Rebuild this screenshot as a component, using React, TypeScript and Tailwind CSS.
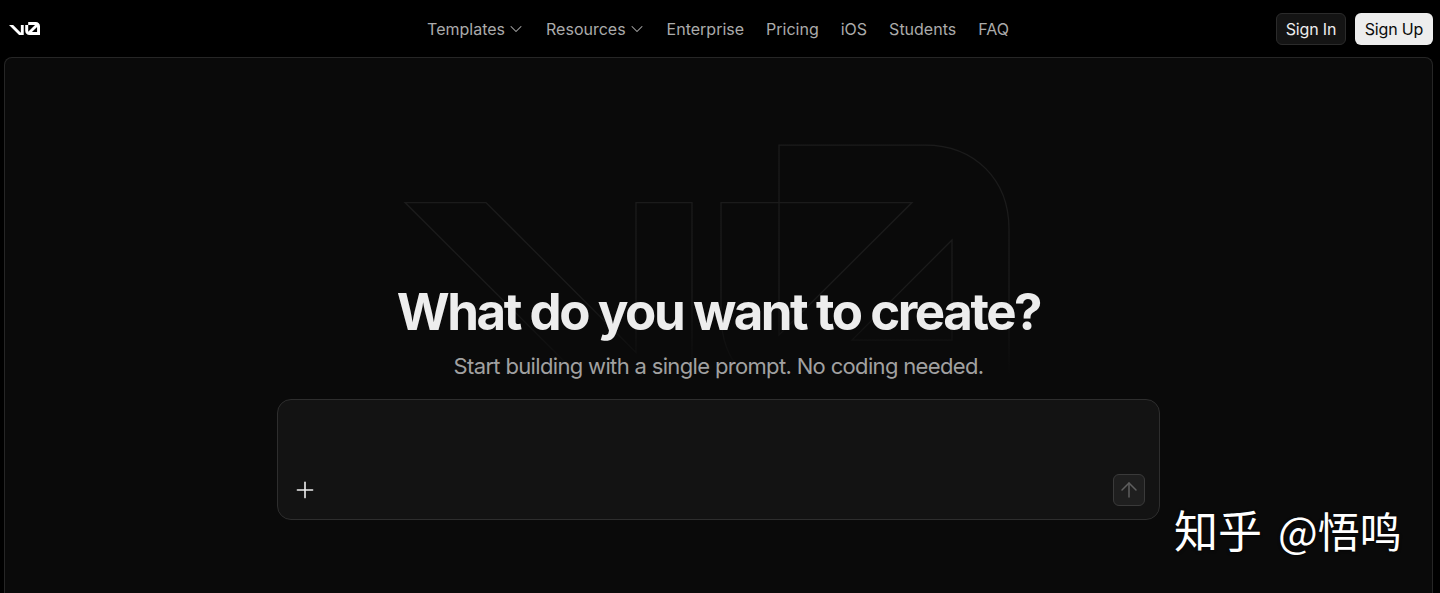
import { ArrowUp, ChevronDown, Plus } from 'lucide-react'

const font = "font-['Inter','Noto_Sans_CJK_SC',sans-serif]"

// same outline for the small logo and the big mark behind the heading
const markV = 'M405 202.500H486L636 352.500V202.500H692V398H601Z'
const markZero =
  'M779 145H925C975 145 1009 180 1009 229V398H805C755 398 721 364 721 314V202.500H779ZM779 202.500V335L912 202.500ZM952 240L852 340H952Z'

function Logo() {
  return (
    <svg width="31" height="13" viewBox="405 145 604 253" fill="white">
      <path d={markV} />
      <path fillRule="evenodd" d={markZero} />
    </svg>
  )
}

function NavBar() {
  return (
    <header className="h-[57px] shrink-0 grid grid-cols-[1fr_auto_1fr] items-center pl-[9px] pr-[7px] bg-black">
      <Logo />
      <nav className="flex items-center gap-[22px] text-[16px] text-[#ababab] -ml-[6px]">
        <span className="flex items-center gap-[1px]">
          Templates <ChevronDown className="-mr-[2px]" size={20} strokeWidth={1.25} />
        </span>
        <span className="flex items-center gap-[1px]">
          Resources <ChevronDown className="-mr-[2px]" size={20} strokeWidth={1.25} />
        </span>
        <span>Enterprise</span>
        <span>Pricing</span>
        <span>iOS</span>
        <span>Students</span>
        <span>FAQ</span>
      </nav>
      <div className="flex items-center justify-end gap-[9px] text-[16px] tracking-[-0.01em]">
        <button className="h-[32px] w-[70px] rounded-md border border-[#2b2b2b] bg-[#141414] text-[#ededed]">
          Sign In
        </button>
        <button className="h-[32px] w-[78px] rounded-md bg-[#ededed] text-[#0a0a0a]">
          Sign Up
        </button>
      </div>
    </header>
  )
}

function BackgroundMark() {
  return (
    <svg
      className="absolute -left-[5px] -top-[58px] pointer-events-none"
      width="1440"
      height="593"
      viewBox="0 0 1440 593"
      fill="none"
      stroke="url(#mark-fade)"
      strokeWidth="1.25"
    >
      <defs>
        <linearGradient id="mark-fade" gradientUnits="userSpaceOnUse" x1="0" y1="290" x2="0" y2="375">
          <stop offset="0" stopColor="#1b1b1b" />
          <stop offset="1" stopColor="#0a0a0a" />
        </linearGradient>
      </defs>
      <path d={markV} />
      <path d={markZero} />
    </svg>
  )
}

function PromptBox() {
  return (
    <div className="w-[883px] h-[121px] mt-[17px] rounded-[14px] border border-[#2e2e2e] bg-[#131313] flex items-end justify-between pl-[14px] pr-[14px] pb-[13px]">
      <div className="h-[32px] flex items-center text-[#ededed]">
        <Plus size={26} strokeWidth={1.5} />
      </div>
      <button className="w-[32px] h-[32px] rounded-md border border-[#3a3a3a] bg-[#1f1f1f] flex items-center justify-center text-[#5f5f5f]">
        <ArrowUp size={24} strokeWidth={1.5} />
      </button>
    </div>
  )
}

export default function App() {
  return (
    <div className={`${font} relative h-[593px] w-[1440px] overflow-hidden bg-black flex flex-col antialiased`}>
      <NavBar />
      <main className="relative flex-1 ml-[4px] mr-[7px] rounded-t-lg border border-b-0 border-[#262626] bg-[#0a0a0a] flex flex-col items-center pt-[224px]">
        <BackgroundMark />
        <h1 className="relative text-[51px] leading-[60px] font-bold tracking-[-0.048em] text-[#ededed]">
          What do you want to create?
        </h1>
        <p className="relative mt-[8px] text-[22px] leading-[32px] tracking-[-0.03em] text-[#a1a1a1]">
          Start building with a single prompt. No coding needed.
        </p>
        <div className="relative">
          <PromptBox />
        </div>
      </main>
      <div className="absolute left-[1174px] top-[501px] flex items-center gap-[16px] h-[56px] whitespace-pre text-white [text-shadow:0_1px_3px_rgba(0,0,0,0.6)] font-['Noto_Sans_CJK_SC',sans-serif]">
        <span className="text-[44px]">知乎</span>
        <span className="text-[42px]">@悟鸣</span>
      </div>
    </div>
  )
}
